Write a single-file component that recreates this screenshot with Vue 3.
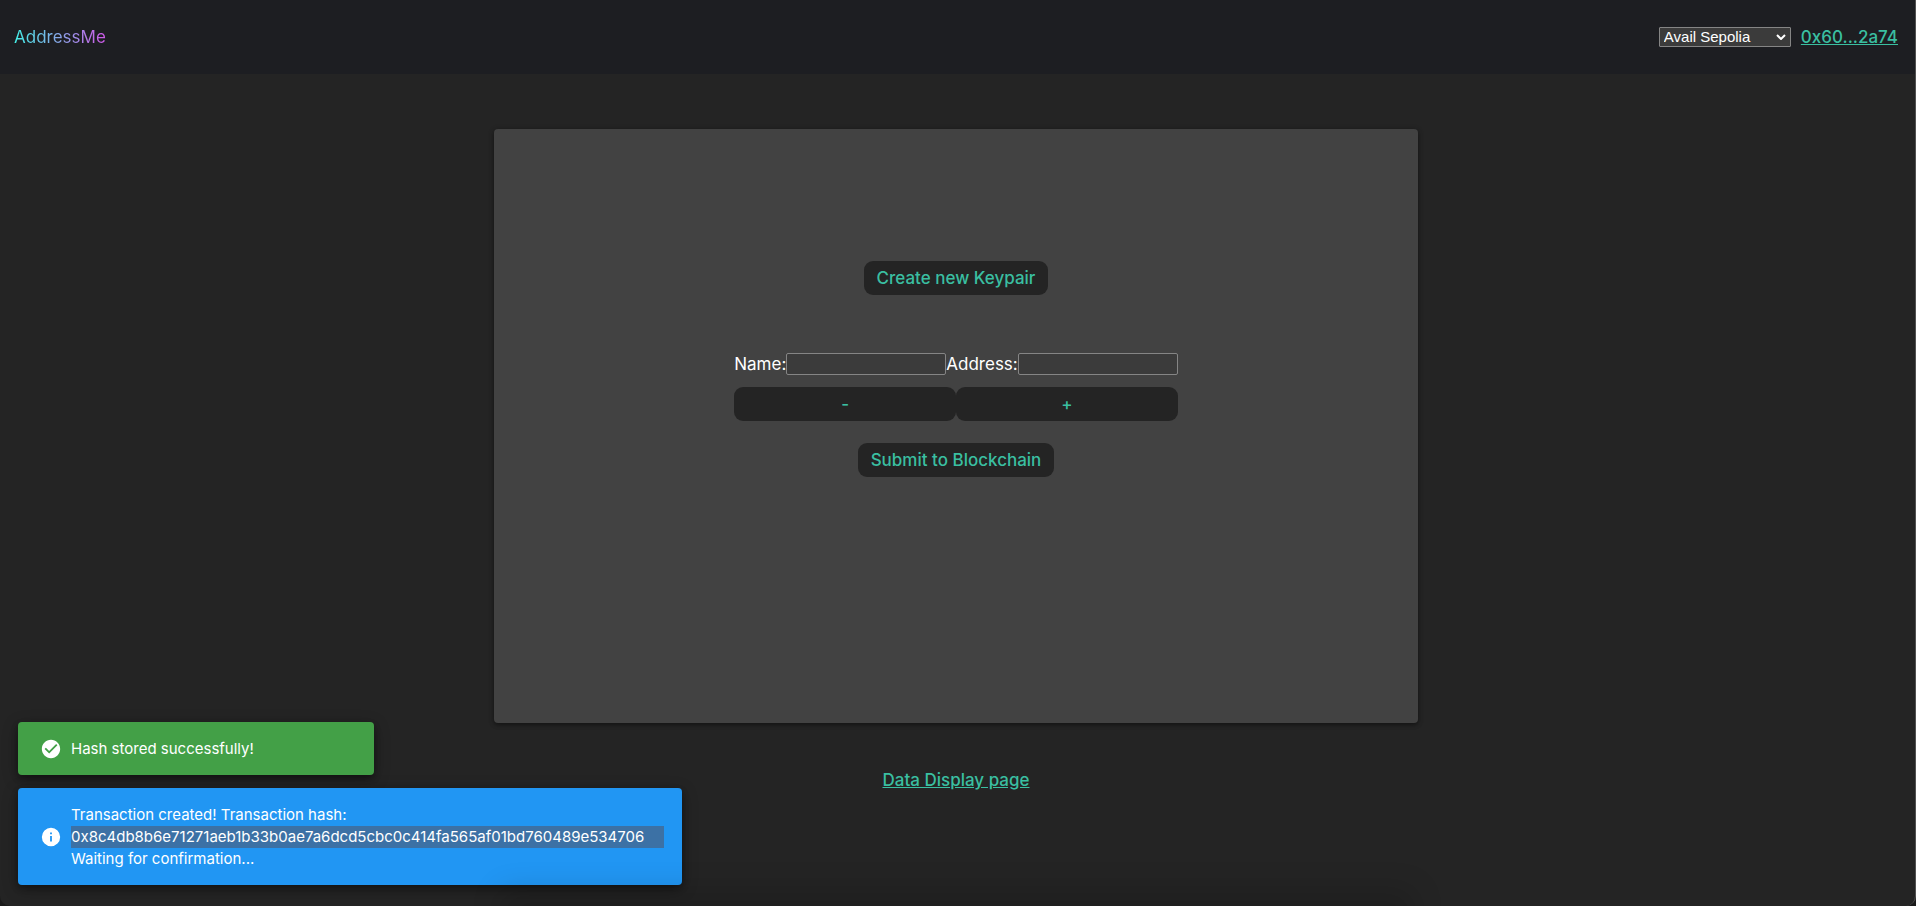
<script setup>
import { ref } from 'vue'

const network = ref('avail-sepolia')
const entries = ref([{ name: '', address: '' }])

const addEntry = () => entries.value.push({ name: '', address: '' })
const removeEntry = () => {
  if (entries.value.length > 1) entries.value.pop()
}
</script>

<template>
  <div class="page">
    <header class="bar">
      <span class="brand">AddressMe</span>
      <div class="account">
        <div class="network">
          <select v-model="network" aria-label="Network">
            <option value="avail-sepolia">Avail Sepolia</option>
          </select>
          <svg class="chevron" viewBox="0 0 10 6" aria-hidden="true">
            <path d="M1 1l4 4 4-4" />
          </svg>
        </div>
        <a href="#account">0x60...2a74</a>
      </div>
    </header>

    <main class="content">
      <section class="card">
        <button type="button" class="create">Create new Keypair</button>
        <form class="form" @submit.prevent>
          <div class="group">
            <div v-for="(entry, i) in entries" :key="i" class="fields">
              <label :for="`name-${i}`">Name:</label>
              <input :id="`name-${i}`" v-model="entry.name" type="text" />
              <label :for="`address-${i}`">Address:</label>
              <input :id="`address-${i}`" v-model="entry.address" type="text" />
            </div>
            <div class="steps">
              <button type="button" @click="removeEntry">-</button>
              <button type="button" @click="addEntry">+</button>
            </div>
          </div>
          <button type="submit">Submit to Blockchain</button>
        </form>
      </section>
      <a href="#data">Data Display page</a>
    </main>

    <div class="toasts">
      <div class="toast success" role="alert">
        <svg viewBox="0 0 24 24" aria-hidden="true">
          <path
            d="M12 2C6.5 2 2 6.5 2 12S6.5 22 12 22 22 17.5 22 12 17.5 2 12 2M10 17L5 12L6.41 10.59L10 14.17L17.59 6.58L19 8L10 17Z"
          />
        </svg>
        <p>Hash stored successfully!</p>
      </div>
      <div class="toast info" role="alert">
        <svg viewBox="0 0 24 24" aria-hidden="true">
          <path
            d="M13,9H11V7H13M13,17H11V11H13M12,2A10,10 0 0,0 2,12A10,10 0 0,0 12,22A10,10 0 0,0 22,12A10,10 0 0,0 12,2Z"
          />
        </svg>
        <p>
          Transaction created! Transaction hash:<br />
          <mark>0x8c4db8b6e71271aeb1b33b0ae7a6dcd5cbc0c414fa565af01bd760489e534706</mark><br />
          Waiting for confirmation...
        </p>
      </div>
    </div>
  </div>
</template>

<style>
html,
body,
#app {
  height: 100%;
  margin: 0;
}
body {
  background: #1a1a1a;
}
</style>

<style scoped>
.page {
  position: relative;
  box-sizing: border-box;
  display: flex;
  flex-direction: column;
  min-height: 100%;
  overflow: hidden;
  border-right: 1px solid #525252;
  border-radius: 0 0 10px 10px;
  background: #242424;
  color: #fff;
  font: 400 17px/26px Inter, "Liberation Sans", sans-serif;
}
.page::after {
  content: "";
  position: absolute;
  left: 27%;
  right: 27%;
  bottom: -20px;
  height: 20px;
  box-shadow: 0 0 30px 16px rgba(0, 0, 0, 0.15);
  pointer-events: none;
}
.bar {
  display: flex;
  align-items: center;
  justify-content: space-between;
  height: 74px;
  padding: 0 17px 0 14px;
  background: #1d1e22;
}
.brand {
  background: linear-gradient(90deg, #43f0e8, #d058e8);
  background-clip: text;
  color: transparent;
}
.account {
  display: flex;
  align-items: center;
  gap: 10px;
}
.network {
  position: relative;
  display: flex;
}
select {
  appearance: none;
  width: 132px;
  height: 20px;
  padding: 0 20px 0 4px;
  border: 1px solid #858585;
  border-radius: 1px;
  background: #3b3b3b;
  color: #fff;
  font: 15px/18px "Liberation Sans", sans-serif;
}
.chevron {
  position: absolute;
  top: 7px;
  right: 5px;
  width: 10px;
  height: 6px;
  fill: none;
  stroke: #fff;
  stroke-width: 2;
  pointer-events: none;
}
a {
  color: #3abfa1;
  font-weight: 500;
  text-decoration: underline;
}
.content {
  display: flex;
  flex-direction: column;
  align-items: center;
  gap: 44px;
  padding: 55px 3px 0 0;
}
.card {
  box-sizing: border-box;
  display: flex;
  flex-direction: column;
  align-items: center;
  gap: 58px;
  width: 924px;
  max-width: 100%;
  min-height: 594px;
  padding: 132px 24px;
  border-radius: 4px;
  background: #424242;
  box-shadow: 0 2px 4px rgba(0, 0, 0, 0.35), 0 1px 6px rgba(0, 0, 0, 0.2);
}
button {
  height: 34px;
  padding: 0 13px;
  border: 0;
  border-radius: 9px;
  background: #242424;
  color: #3abfa1;
  font: inherit;
  font-weight: 500;
}
.form {
  display: flex;
  flex-direction: column;
  align-items: center;
  gap: 22px;
}
.group {
  display: flex;
  flex-direction: column;
  gap: 12px;
}
.fields {
  display: flex;
  align-items: center;
  height: 22px;
}
input {
  box-sizing: border-box;
  width: 160px;
  height: 22px;
  padding: 1px 2px;
  border: 1px solid #858585;
  border-radius: 2px;
  background: #3b3b3b;
  color: #fff;
  font: 15px "Liberation Sans", sans-serif;
}
.steps {
  display: flex;
}
.steps button {
  flex: 1;
}
.toasts {
  position: absolute;
  left: 18px;
  bottom: 21px;
  display: flex;
  flex-direction: column;
  align-items: flex-start;
  gap: 13px;
}
.toast {
  box-sizing: border-box;
  display: flex;
  align-items: center;
  gap: 9px;
  min-width: 356px;
  min-height: 53px;
  padding: 15px 18px 15px 22px;
  border-radius: 4px;
  font-size: 15px;
  line-height: 22px;
  box-shadow: 0 3px 6px rgba(0, 0, 0, 0.3), 0 4px 16px rgba(0, 0, 0, 0.3);
}
.toast svg {
  flex: none;
  width: 22px;
  height: 22px;
  fill: #fff;
}
.toast p {
  flex: 1;
  margin: 0;
}
.success {
  background: #43a047;
}
.info {
  min-width: 664px;
  min-height: 97px;
  background: #2196f3;
}
mark {
  display: inline-block;
  min-width: 100%;
  background: #3c71a5;
  color: #fff;
}
</style>
